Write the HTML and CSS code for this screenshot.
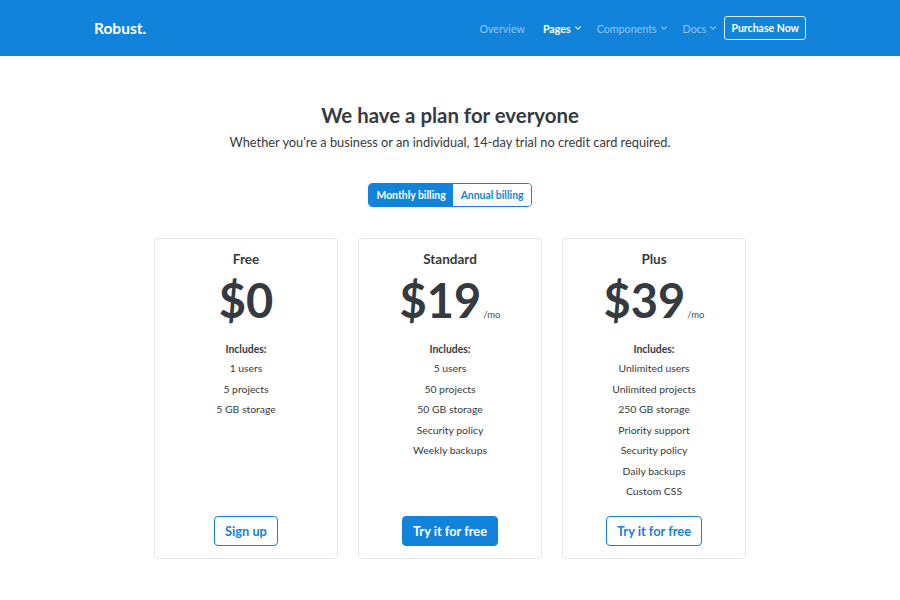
FILE: index.html
```html
<!DOCTYPE html>
<html lang="en">
<head>
<meta charset="utf-8">
<title>Robust. Pricing</title>
<link rel="stylesheet" href="styles.css">
</head>
<body>
<header class="navbar">
  <div class="container nav-inner">
    <a class="brand" href="#">Robust.</a>
    <nav class="nav">
      <a class="nav-link first" href="#">Overview</a>
      <a class="nav-link active" href="#">Pages <svg class="caret" viewBox="0 0 10 6" width="6" height="4"><path d="M1 1l4 4 4-4" fill="none" stroke="currentColor" stroke-width="1.8" stroke-linecap="round" stroke-linejoin="round"/></svg></a>
      <a class="nav-link" href="#">Components <svg class="caret" viewBox="0 0 10 6" width="6" height="4"><path d="M1 1l4 4 4-4" fill="none" stroke="currentColor" stroke-width="1.8" stroke-linecap="round" stroke-linejoin="round"/></svg></a>
      <a class="nav-link" href="#">Docs <svg class="caret" viewBox="0 0 10 6" width="6" height="4"><path d="M1 1l4 4 4-4" fill="none" stroke="currentColor" stroke-width="1.8" stroke-linecap="round" stroke-linejoin="round"/></svg></a>
      <a class="btn-outline-light" href="#">Purchase Now</a>
    </nav>
  </div>
</header>

<main class="pricing">
  <h1 class="title">We have a plan for everyone</h1>
  <p class="lead">Whether you're a business or an individual, 14-day trial no credit card required.</p>

  <div class="toggle">
    <button class="toggle-btn on">Monthly billing</button>
    <button class="toggle-btn">Annual billing</button>
  </div>

  <div class="plans">
    <div class="plan">
      <h2 class="plan-name">Free</h2>
      <div class="price"><span class="amount">$0</span></div>
      <ul class="features">
        <li class="inc">Includes:</li>
        <li>1 users</li>
        <li>5 projects</li>
        <li>5 GB storage</li>
      </ul>
      <div class="plan-action"><a class="btn btn-outline" href="#">Sign up</a></div>
    </div>
    <div class="plan">
      <h2 class="plan-name">Standard</h2>
      <div class="price"><span class="amount">$19</span><span class="per">/mo</span></div>
      <ul class="features">
        <li class="inc">Includes:</li>
        <li>5 users</li>
        <li>50 projects</li>
        <li>50 GB storage</li>
        <li>Security policy</li>
        <li>Weekly backups</li>
      </ul>
      <div class="plan-action"><a class="btn btn-primary" href="#">Try it for free</a></div>
    </div>
    <div class="plan">
      <h2 class="plan-name">Plus</h2>
      <div class="price"><span class="amount">$39</span><span class="per">/mo</span></div>
      <ul class="features">
        <li class="inc">Includes:</li>
        <li>Unlimited users</li>
        <li>Unlimited projects</li>
        <li>250 GB storage</li>
        <li>Priority support</li>
        <li>Security policy</li>
        <li>Daily backups</li>
        <li>Custom CSS</li>
      </ul>
      <div class="plan-action"><a class="btn btn-outline" href="#">Try it for free</a></div>
    </div>
  </div>
</main>
</body>
</html>
```

FILE: styles.css
```css
* { box-sizing: border-box; }
body {
  margin: 0;
  font-family: Lato, "Open Sans", "Liberation Sans", sans-serif;
  color: #343a40;
  background: #fff;
}
a { text-decoration: none; }

.navbar {
  background: #1283da;
  height: 56px;
}
.container {
  width: 712px;
  margin: 0 auto;
}
.nav-inner {
  height: 56px;
  display: flex;
  align-items: center;
  justify-content: space-between;
}
.brand {
  color: #fff;
  font-weight: 700;
  font-size: 15.5px;
}
.nav {
  display: flex;
  align-items: center;
}
.nav-link {
  color: rgba(255,255,255,0.55);
  font-size: 10.7px;
  padding: 0 8px;
  display: flex;
  align-items: center;
  gap: 4px;
}
.nav-link.first { margin-right: 2px; }
.nav-link.active {
  color: #fff;
  font-weight: 700;
}
.caret { display: block; }
.btn-outline-light {
  color: #fff;
  font-size: 10.5px;
  font-weight: 700;
  border: 1px solid rgba(255,255,255,0.85);
  border-radius: 3px;
  height: 24px;
  padding: 0 6px;
  display: flex;
  align-items: center;
}

.pricing {
  padding-top: 47px;
  display: flex;
  flex-direction: column;
  align-items: center;
}
.title {
  margin: 0;
  font-size: 20.4px;
  line-height: 25px;
  font-weight: 700;
  color: #343a40;
}
.lead {
  margin: 4px 0 0;
  font-size: 12.8px;
  line-height: 20px;
  color: #343a40;
}
.toggle {
  margin-top: 31px;
  display: flex;
  border: 1px solid #1283da;
  border-radius: 4px;
  overflow: hidden;
}
.toggle-btn {
  font-family: inherit;
  font-size: 10.4px;
  font-weight: 700;
  height: 22px;
  padding: 0 7.5px;
  border: 0;
  background: #fff;
  color: #1283da;
}
.toggle-btn.on {
  background: #1283da;
  color: #fff;
}

.plans {
  margin-top: 31px;
  display: grid;
  grid-template-columns: repeat(3, 184px);
  gap: 20px;
}
.plan {
  border: 1px solid #e3e6ea;
  border-radius: 4px;
  height: 321px;
  padding: 12px 16px 12px;
  display: flex;
  flex-direction: column;
  align-items: center;
  text-align: center;
}
.plan-name {
  margin: 0;
  font-size: 13.5px;
  line-height: 17px;
  font-weight: 700;
}
.price {
  margin-top: 8px;
  display: flex;
  align-items: baseline;
  line-height: 1;
}
.amount {
  font-size: 47px;
  font-weight: 700;
  line-height: 48px;
}
.per {
  font-size: 9.5px;
  color: #495057;
  margin-left: 2px;
}
.features {
  list-style: none;
  margin: 15.5px 0 0;
  padding: 0;
  font-size: 10.4px;
  line-height: 20.5px;
  color: #343a40;
}
.features .inc {
  font-weight: 700;
  line-height: 18.5px;
}
.plan-action {
  margin-top: auto;
}
.btn {
  display: inline-flex;
  align-items: center;
  height: 30px;
  padding: 0 10px;
  font-size: 12.8px;
  font-weight: 700;
  border-radius: 4px;
}
.btn-outline {
  color: #1283da;
  border: 1px solid #1283da;
  background: #fff;
}
.btn-primary {
  color: #fff;
  background: #1283da;
  border: 1px solid #1283da;
}
```
